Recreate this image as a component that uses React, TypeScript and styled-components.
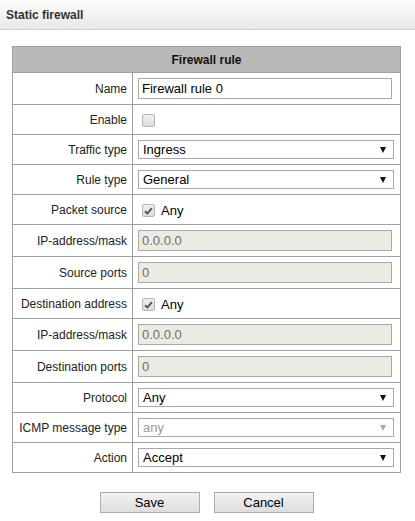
import styled, { createGlobalStyle } from "styled-components";

const GlobalStyle = createGlobalStyle`
  body {
    margin: 0;
    background: #fff;
    font-family: "Liberation Sans", Arial, sans-serif;
  }
`;

const TitleBar = styled.div`
  height: 30px;
  box-sizing: border-box;
  border-bottom: 1px solid #cfcfcf;
  background: linear-gradient(#fdfdfd, #e8e8e8);
  display: flex;
  align-items: center;
  padding-left: 6px;
  font-size: 12px;
  font-weight: bold;
  color: #333;
`;

const Page = styled.div`
  padding: 16px 14px 0 12px;
`;

const Table = styled.table`
  width: 389px;
  border-collapse: collapse;
  border: 1px solid #a0a0a0;
  font-size: 12px;
  color: #222;
`;

const HeadCell = styled.th`
  background: #b8b8b8;
  border: 1px solid #a0a0a0;
  height: 25px;
  padding: 0;
  font-weight: bold;
  font-size: 12px;
  color: #111;
`;

const Label = styled.td<{ $tall?: boolean }>`
  width: 114px;
  border: 1px solid #a0a0a0;
  text-align: right;
  padding: 0 5px 0 0;
  height: ${(p) => (p.$tall ? 31 : 29)}px;
  white-space: nowrap;
`;

const Field = styled.td`
  border: 1px solid #a0a0a0;
  padding: 0 0 0 5px;
`;

const TextInput = styled.input`
  width: 254px;
  height: 21px;
  box-sizing: border-box;
  border: 1px solid #a9a9a9;
  padding: 0 3px;
  font-family: "Liberation Sans", Arial, sans-serif;
  font-size: 13px;
  color: #000;
  display: block;
  margin: 0;
  &:disabled {
    background: #ebebe4;
    color: #6d6d6d;
  }
`;

const SelectBox = styled.div<{ $disabled?: boolean }>`
  position: relative;
  width: 256px;
  height: 19px;
  box-sizing: border-box;
  border: 1px solid #a9a9a9;
  display: flex;
  align-items: center;
  padding-left: 4px;
  font-size: 13px;
  color: ${(p) => (p.$disabled ? "#9a9a9a" : "#000")};
`;

const Arrow = styled.span<{ $disabled?: boolean }>`
  position: absolute;
  right: 7px;
  top: 6px;
  width: 0;
  height: 0;
  border-left: 3px solid transparent;
  border-right: 3px solid transparent;
  border-top: 6px solid ${(p) => (p.$disabled ? "#a8a8a8" : "#111")};
`;

const CheckRow = styled.div`
  display: flex;
  align-items: center;
  font-size: 13px;
  color: #000;
  padding-top: 2px;
`;

const Check = styled.span`
  width: 13px;
  height: 13px;
  box-sizing: border-box;
  margin: 0 6px 0 4px;
  border: 1px solid #b5b5b5;
  border-radius: 2px;
  background: linear-gradient(#f0f0f0, #dcdcdc);
  display: flex;
  align-items: center;
  justify-content: center;
`;

const Buttons = styled.div`
  display: flex;
  justify-content: center;
  gap: 14px;
  width: 389px;
  margin-top: 19px;
`;

const Button = styled.button`
  width: 100px;
  height: 21px;
  box-sizing: border-box;
  border: 1px solid #acacac;
  background: linear-gradient(#f2f2f2, #dddddd);
  font-family: "Liberation Sans", Arial, sans-serif;
  font-size: 13px;
  color: #000;
  padding: 0;
`;

function Checkbox({ checked }: { checked?: boolean }) {
  return (
    <Check>
      {checked && (
        <svg width="9" height="8" viewBox="0 0 9 8">
          <path d="M1 4.2 L3.4 6.4 L8 1.2" stroke="#555" strokeWidth="2" fill="none" />
        </svg>
      )}
    </Check>
  );
}

function Select({ value, disabled }: { value: string; disabled?: boolean }) {
  return (
    <SelectBox $disabled={disabled}>
      {value}
      <Arrow $disabled={disabled} />
    </SelectBox>
  );
}

export default function App() {
  return (
    <>
      <GlobalStyle />
      <TitleBar>Static firewall</TitleBar>
      <Page>
        <Table>
          <thead>
            <tr>
              <HeadCell colSpan={2}>Firewall rule</HeadCell>
            </tr>
          </thead>
          <tbody>
            <tr>
              <Label $tall>Name</Label>
              <Field>
                <TextInput defaultValue="Firewall rule 0" />
              </Field>
            </tr>
            <tr>
              <Label>Enable</Label>
              <Field>
                <CheckRow>
                  <Checkbox />
                </CheckRow>
              </Field>
            </tr>
            <tr>
              <Label>Traffic type</Label>
              <Field>
                <Select value="Ingress" />
              </Field>
            </tr>
            <tr>
              <Label>Rule type</Label>
              <Field>
                <Select value="General" />
              </Field>
            </tr>
            <tr>
              <Label>Packet source</Label>
              <Field>
                <CheckRow>
                  <Checkbox checked />
                  Any
                </CheckRow>
              </Field>
            </tr>
            <tr>
              <Label $tall>IP-address/mask</Label>
              <Field>
                <TextInput disabled defaultValue="0.0.0.0" />
              </Field>
            </tr>
            <tr>
              <Label $tall>Source ports</Label>
              <Field>
                <TextInput disabled defaultValue="0" />
              </Field>
            </tr>
            <tr>
              <Label>Destination address</Label>
              <Field>
                <CheckRow>
                  <Checkbox checked />
                  Any
                </CheckRow>
              </Field>
            </tr>
            <tr>
              <Label $tall>IP-address/mask</Label>
              <Field>
                <TextInput disabled defaultValue="0.0.0.0" />
              </Field>
            </tr>
            <tr>
              <Label $tall>Destination ports</Label>
              <Field>
                <TextInput disabled defaultValue="0" />
              </Field>
            </tr>
            <tr>
              <Label>Protocol</Label>
              <Field>
                <Select value="Any" />
              </Field>
            </tr>
            <tr>
              <Label>ICMP message type</Label>
              <Field>
                <Select value="any" disabled />
              </Field>
            </tr>
            <tr>
              <Label>Action</Label>
              <Field>
                <Select value="Accept" />
              </Field>
            </tr>
          </tbody>
        </Table>
        <Buttons>
          <Button>Save</Button>
          <Button>Cancel</Button>
        </Buttons>
      </Page>
    </>
  );
}
